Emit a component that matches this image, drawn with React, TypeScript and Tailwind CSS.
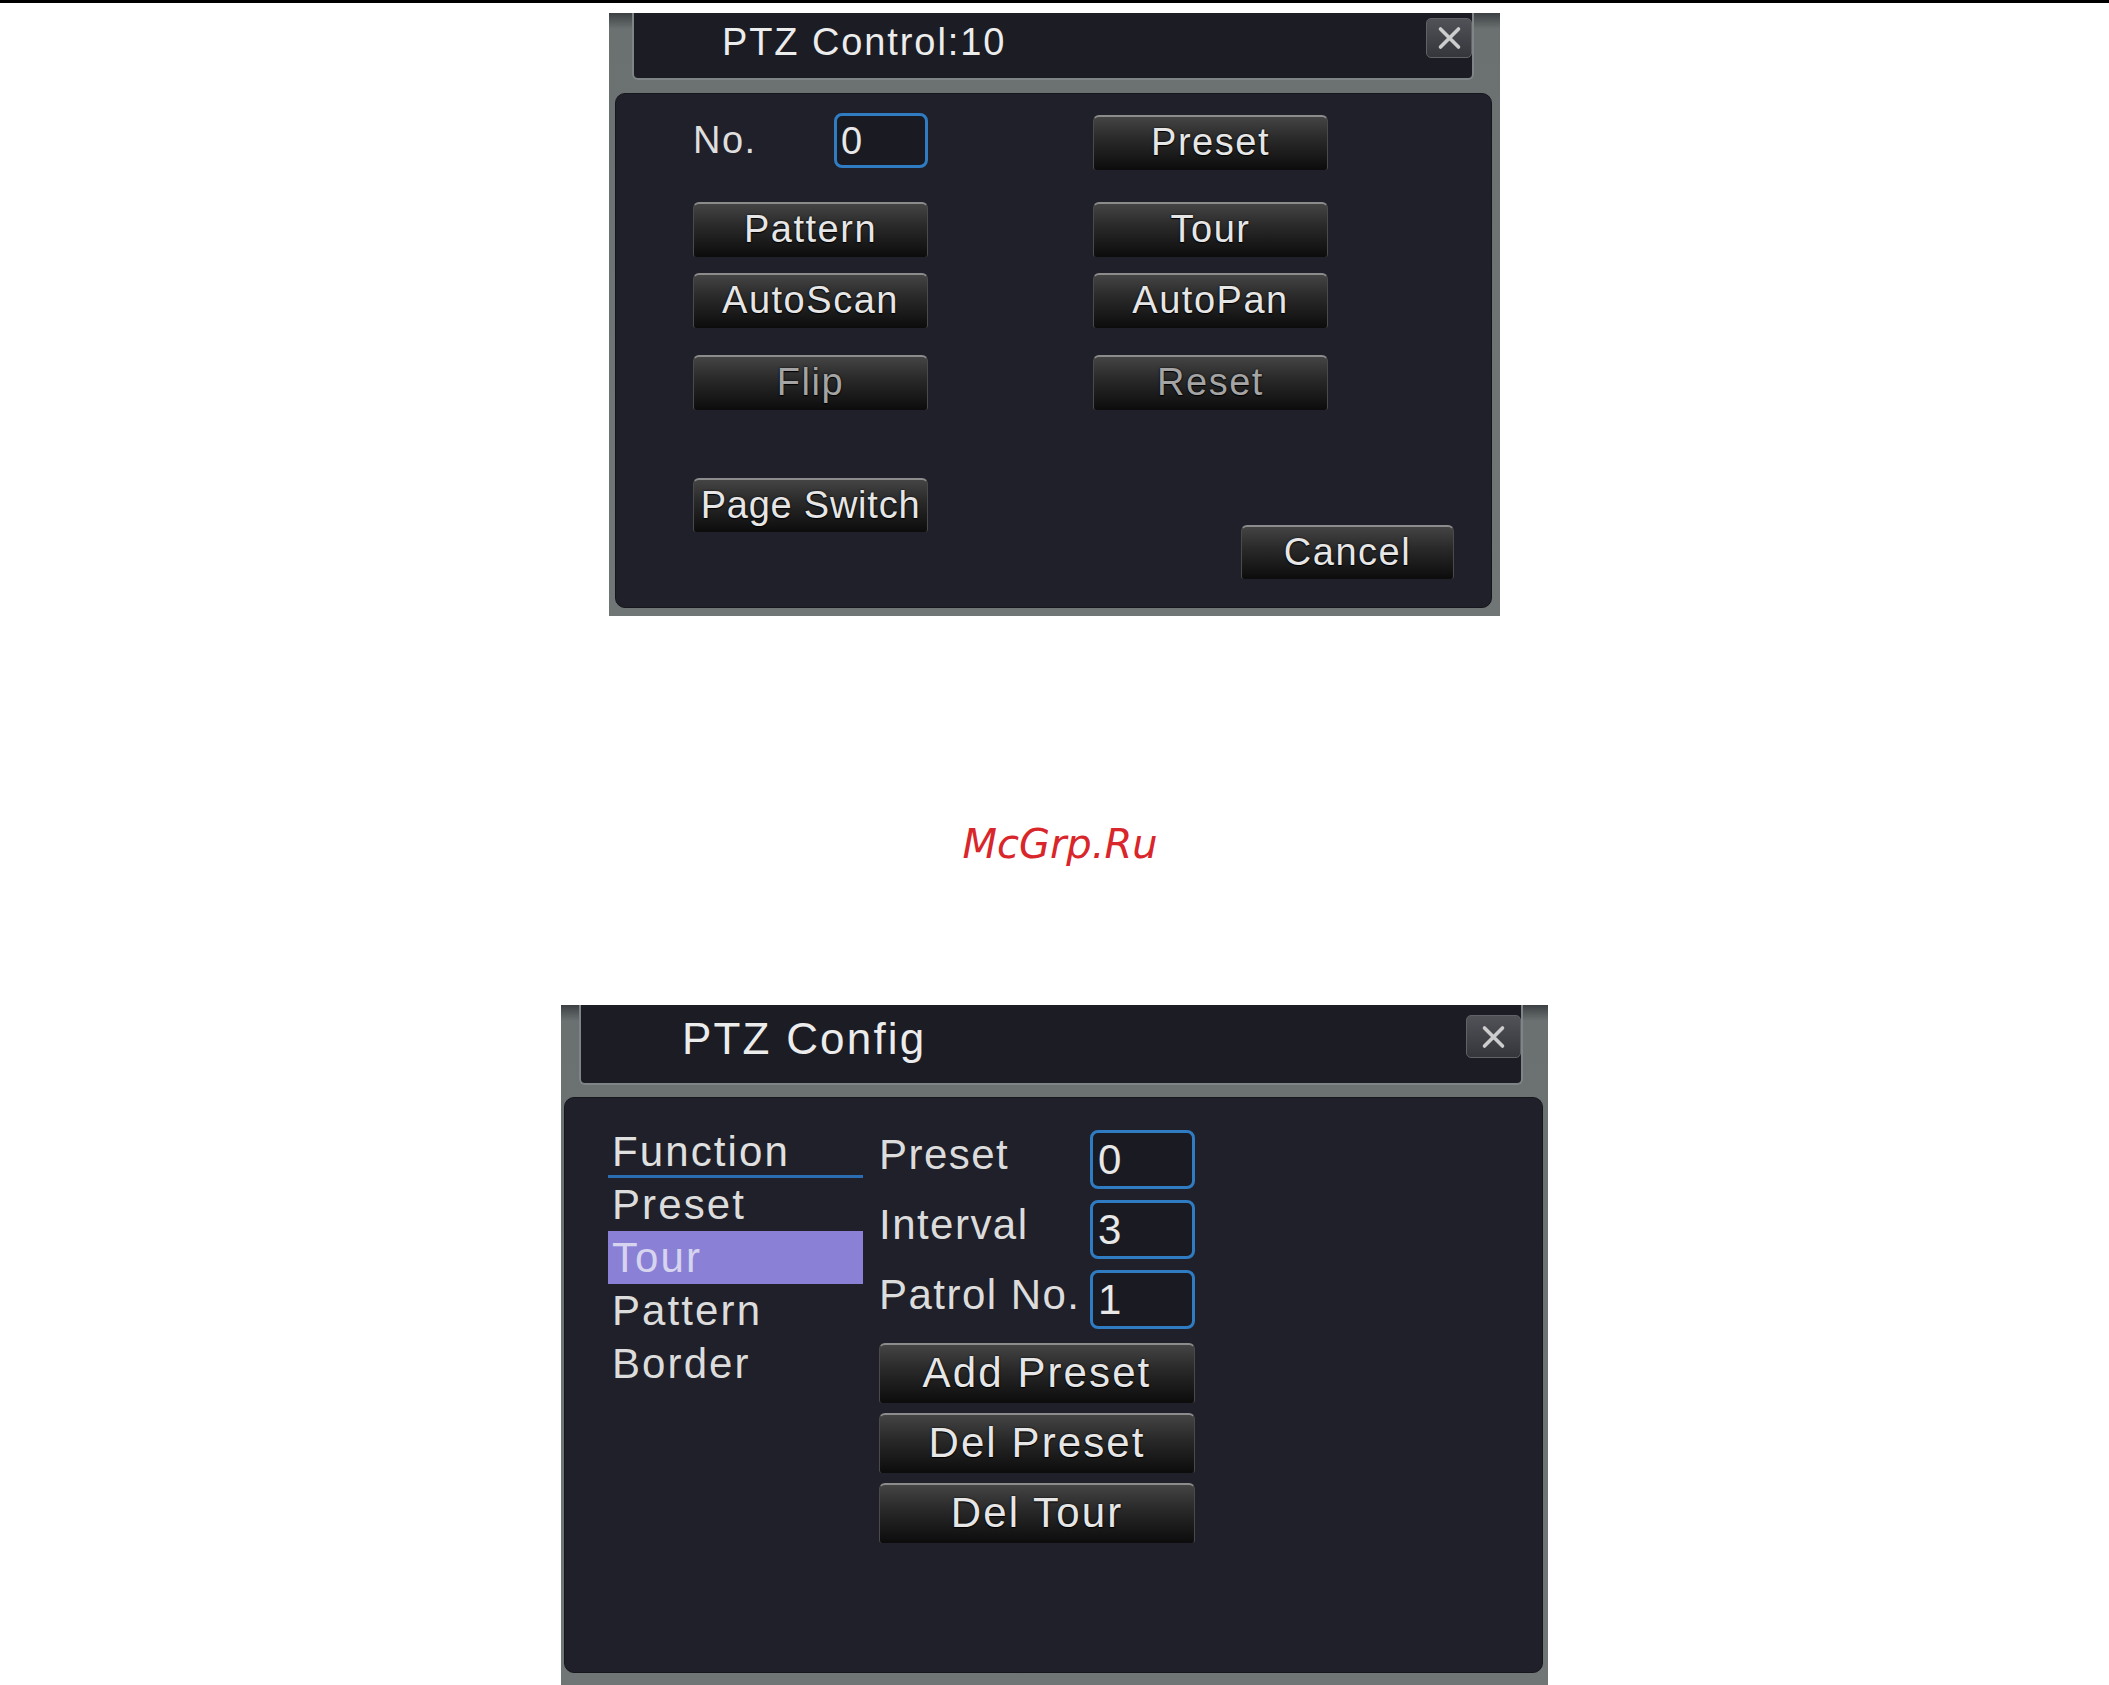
import React from 'react';

const FONT = "font-['Liberation_Sans',Arial,sans-serif]";

interface BtnProps {
  label: string;
  className?: string;
  dim?: boolean;
}

const Btn: React.FC<BtnProps> = ({ label, className = '', dim = false }) => (
  <div
    className={`flex items-center justify-center whitespace-nowrap rounded-t-[6px] rounded-b-[3px] border-t-2 border-x border-t-[#8c8c8c] border-x-[#4a4a4a] bg-[linear-gradient(to_bottom,#444444_0%,#2a2a2a_40%,#0c0c0c_100%)] pb-[3px] [text-shadow:0_0_2px_#000,0_1px_1px_#000] ${
      dim ? 'text-[#a4a4a4]' : 'text-[#e6e6e6]'
    } ${className}`}
  >
    {label}
  </div>
);

const CloseBtn: React.FC<{ className?: string }> = ({ className = '' }) => (
  <div
    className={`flex items-center justify-center rounded-[5px] border border-[#5f6266] bg-[linear-gradient(to_bottom,#505257,#34363b)] ${className}`}
  >
    <svg viewBox="0 0 24 24" className="h-[24px] w-[27px]">
      <path d="M3 3L21 21M21 3L3 21" stroke="#cdcdcd" strokeWidth="3.6" strokeLinecap="round" />
    </svg>
  </div>
);

const Field: React.FC<{ value: string; className?: string }> = ({ value, className = '' }) => (
  <div
    className={`flex items-center rounded-[8px] border-[3px] border-[#2f7cc2] bg-[#1a1b22] pl-[4px] text-[#e8e8e8] ${className}`}
  >
    {value}
  </div>
);

function PtzControl() {
  return (
    <div className="mx-auto mt-[10px] flex h-[603px] w-[891px] flex-col bg-[linear-gradient(to_bottom,#3c4043_0px,#6b7171_16px,#707676_100%)]">
      {/* title bar */}
      <div className="ml-[23px] mr-[26px] flex h-[67px] items-start justify-between rounded-b-[6px] border-x-2 border-b-2 border-[#7f8586] bg-[#1b1c24]">
        <div className="pl-[88px] pt-[10px] text-[38px] leading-[38px] tracking-[0.05em] text-[#ececec]">
          PTZ Control:10
        </div>
        <CloseBtn className="mt-[5px] h-[40px] w-[46px]" />
      </div>

      {/* body */}
      <div className="mb-[8px] ml-[6px] mr-[8px] mt-[13px] flex-1 rounded-[10px] border border-[#16171d] bg-[#1f2029] pl-[77px] pt-[19px] text-[38px] leading-[38px] tracking-[0.04em]">
        <div className="flex h-[57px] gap-x-[165px]">
          <div className="flex w-[235px] items-start justify-between">
            <span className="flex h-[55px] items-center pb-[2px] text-[#dedede]">No.</span>
            <Field value="0" className="h-[55px] w-[94px] rounded-[7px]" />
          </div>
          <Btn label="Preset" className="mt-[2px] h-[55px] w-[235px]" />
        </div>
        <div className="mt-[32px] flex gap-x-[165px]">
          <Btn label="Pattern" className="h-[55px] w-[235px]" />
          <Btn label="Tour" className="h-[55px] w-[235px]" />
        </div>
        <div className="mt-[16px] flex gap-x-[165px]">
          <Btn label="AutoScan" className="h-[55px] w-[235px]" />
          <Btn label="AutoPan" className="h-[55px] w-[235px]" />
        </div>
        <div className="mt-[27px] flex gap-x-[165px]">
          <Btn label="Flip" dim className="h-[55px] w-[235px]" />
          <Btn label="Reset" dim className="h-[55px] w-[235px]" />
        </div>
        <div className="mt-[68px] flex items-start">
          <Btn label="Page Switch" className="h-[54px] w-[235px] tracking-[0.02em]" />
          <Btn label="Cancel" className="ml-[313px] mt-[47px] h-[54px] w-[213px]" />
        </div>
      </div>
    </div>
  );
}

const menu = ['Function', 'Preset', 'Tour', 'Pattern', 'Border'];

function PtzConfig() {
  return (
    <div className="mx-auto flex h-[680px] w-[987px] flex-col bg-[linear-gradient(to_bottom,#3c4043_0px,#6b7171_16px,#707676_100%)]">
      {/* title bar */}
      <div className="ml-[18px] mr-[25px] flex h-[80px] items-start justify-between rounded-b-[6px] border-x-2 border-b-2 border-[#7f8586] bg-[#1b1c24]">
        <div className="pl-[101px] pt-[12px] text-[44px] leading-[44px] tracking-[0.05em] text-[#ececec]">
          PTZ Config
        </div>
        <CloseBtn className="mt-[10px] h-[43px] w-[55px]" />
      </div>

      {/* body */}
      <div className="mb-[12px] ml-[3px] mr-[5px] mt-[12px] flex flex-1 items-start rounded-[10px] border border-[#16171d] bg-[#1f2029] pl-[43px] pt-[27px] text-[42px] tracking-[0.05em]">
        <div className="flex w-[255px] flex-col">
          {menu.map((m) => (
            <div
              key={m}
              className={`h-[53px] pl-[4px] leading-[53px] ${
                m === 'Function'
                  ? 'border-b-[3px] border-[#2b6db3] leading-[50px] text-[#e0e0e0]'
                  : m === 'Tour'
                    ? 'bg-[#8a81d6] text-[#d6d4ee]'
                    : 'text-[#dcdcdc]'
              }`}
            >
              {m}
            </div>
          ))}
        </div>

        <div className="ml-[16px] mt-[5px] flex w-[316px] flex-col">
          <div className="flex flex-col gap-[11px]">
            {[
              ['Preset', '0'],
              ['Interval', '3'],
              ['Patrol No.', '1'],
            ].map(([label, v]) => (
              <div key={label} className="flex h-[59px] items-center">
                <span className="w-[211px] whitespace-nowrap pb-[10px] leading-[42px] tracking-[0.035em] text-[#dcdcdc]">
                  {label}
                </span>
                <Field value={v} className="h-[59px] w-[105px] pl-[5px] leading-[42px]" />
              </div>
            ))}
          </div>
          <div className="mt-[14px] flex flex-col gap-[10px] leading-[42px]">
            <Btn label="Add Preset" className="h-[60px] w-[316px]" />
            <Btn label="Del Preset" className="h-[60px] w-[316px]" />
            <Btn label="Del Tour" className="h-[60px] w-[316px]" />
          </div>
        </div>
      </div>
    </div>
  );
}

export default function App() {
  return (
    <div className={`h-[1685px] w-[2109px] overflow-hidden bg-white ${FONT}`}>
      <div className="h-[3px] bg-black" />
      <PtzControl />
      <div className="h-[389px] pl-[11px] pt-[208px] text-center font-['DejaVu_Sans',sans-serif] text-[40px] italic leading-[40px] text-[#d9262b]">
        McGrp.Ru
      </div>
      <PtzConfig />
    </div>
  );
}
